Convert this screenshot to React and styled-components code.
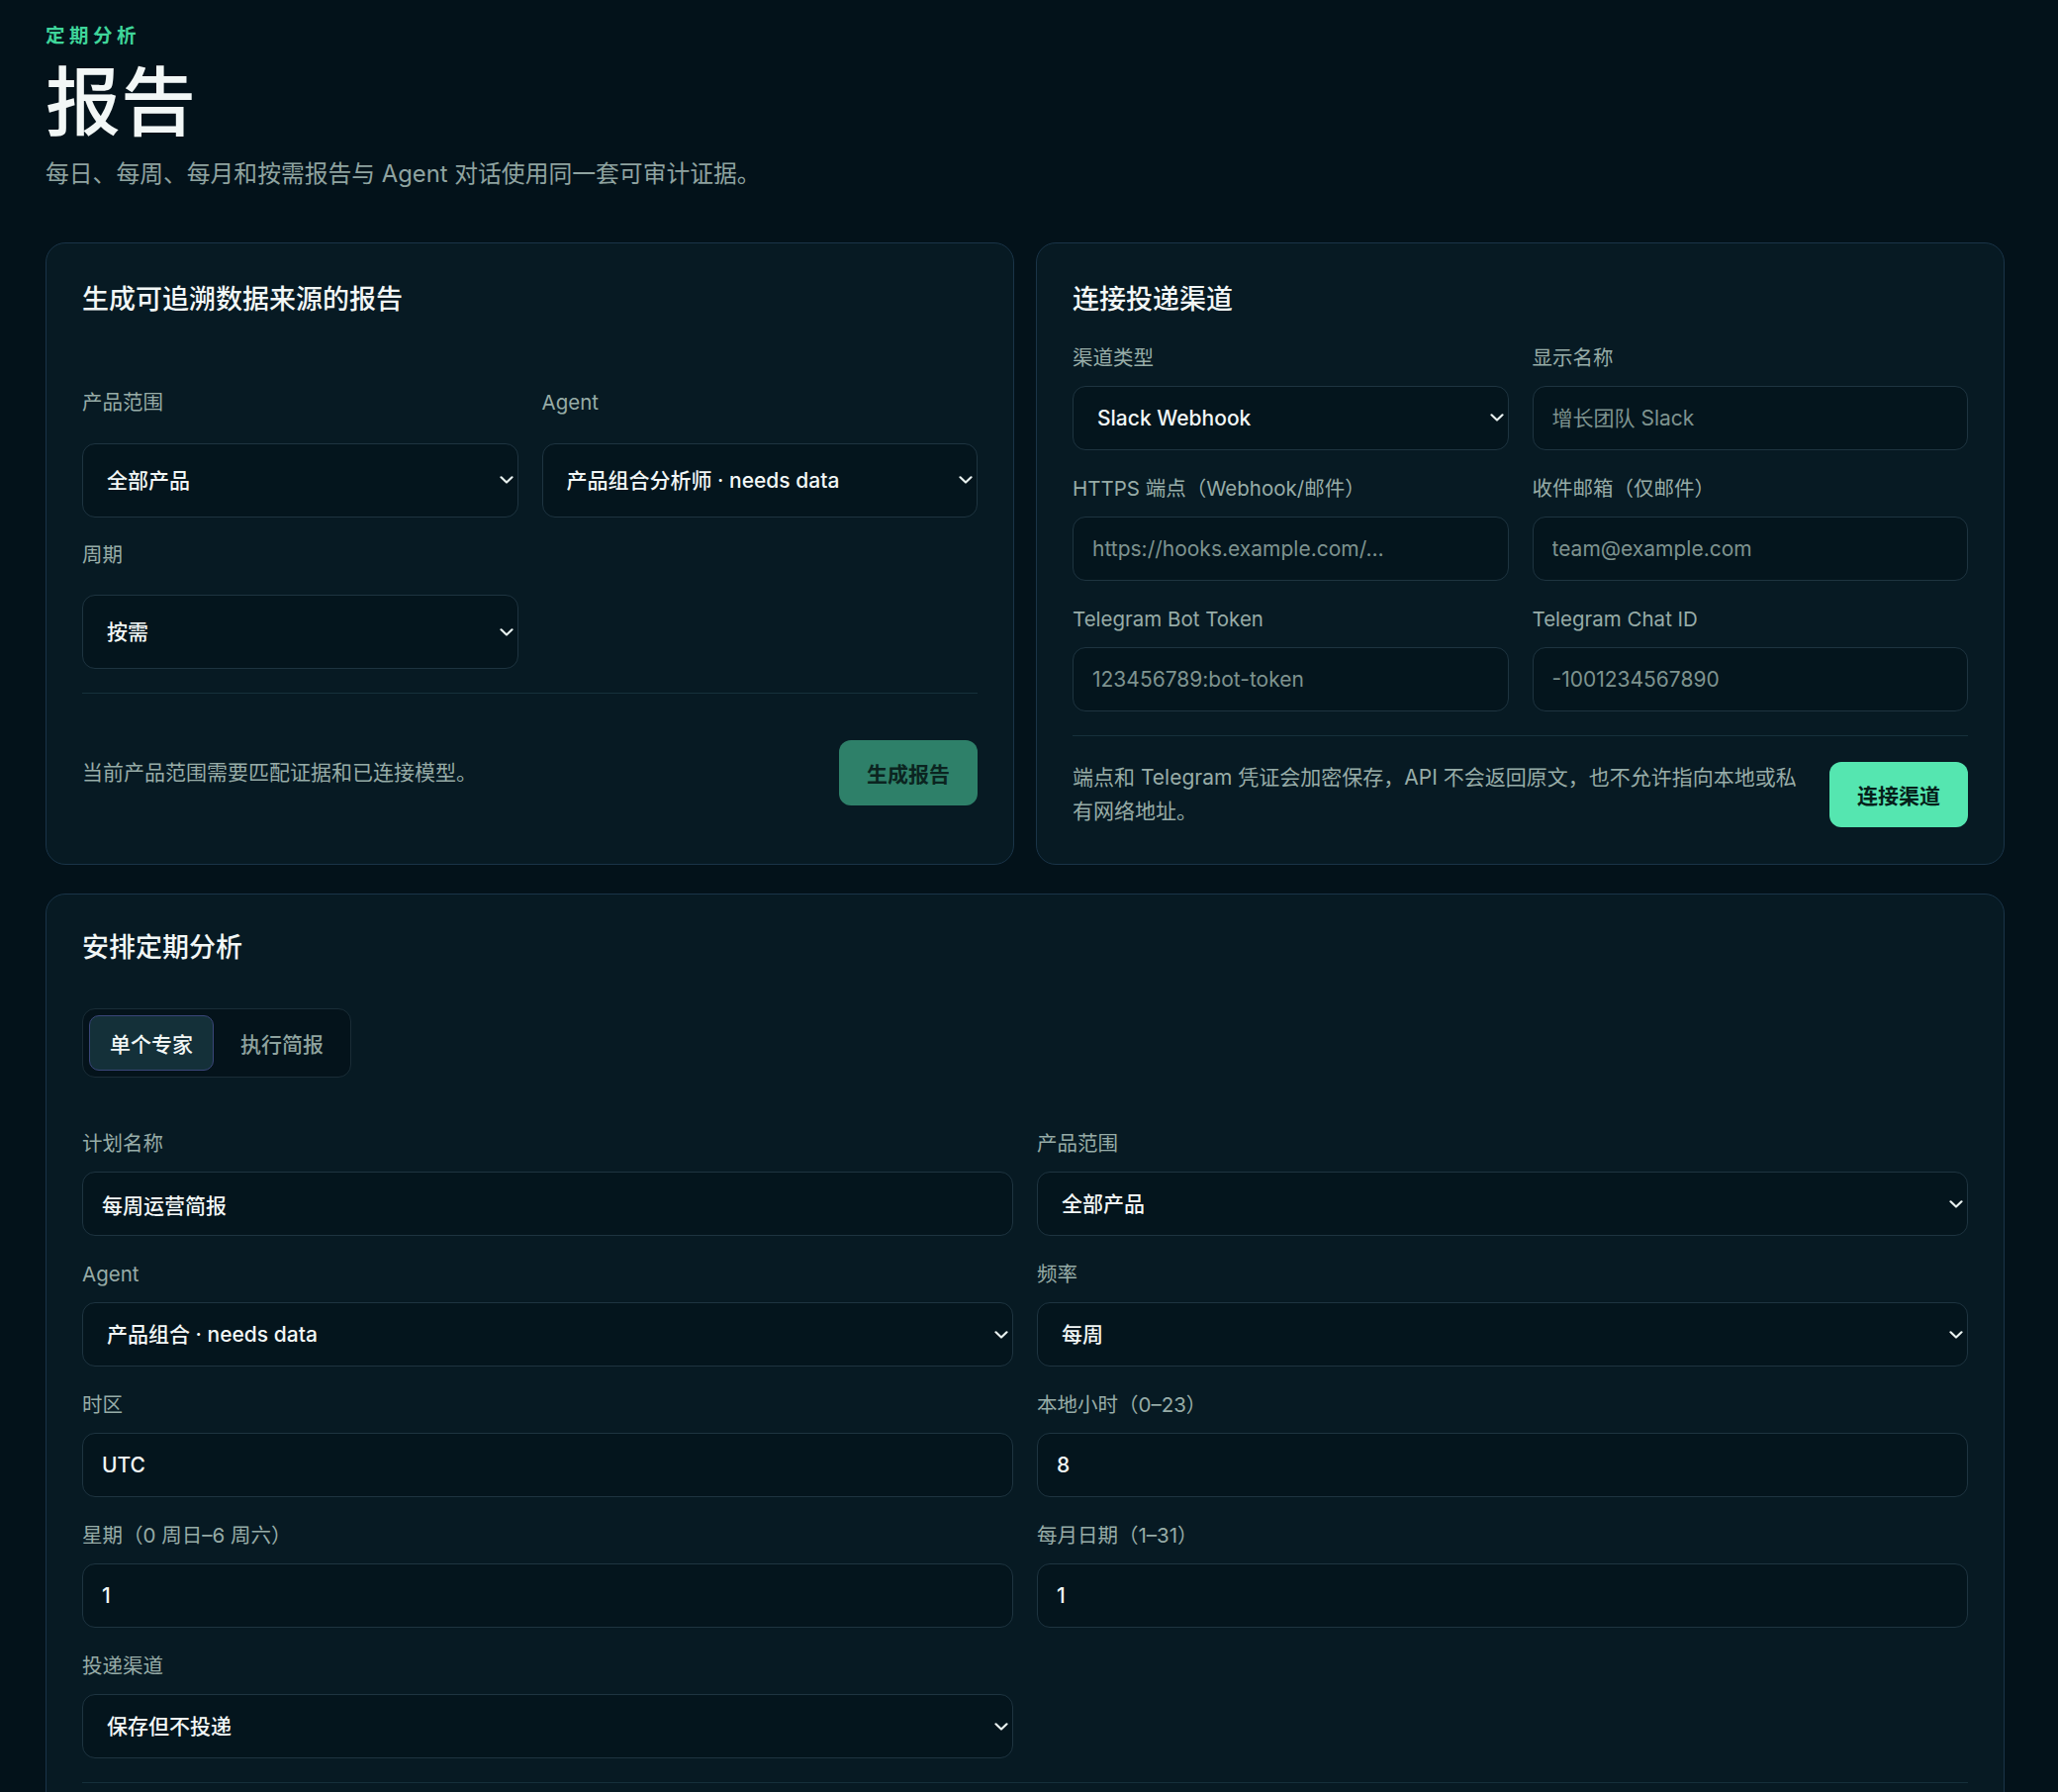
import React from 'react';
import styled, { createGlobalStyle } from 'styled-components';

const GlobalStyle = createGlobalStyle`
  * { box-sizing: border-box; }
  html, body { margin: 0; padding: 0; background: #03121a; }
  body {
    font-family: Inter, "Noto Sans CJK SC", "Noto Sans", sans-serif;
    color: #eef5f3;
    -webkit-font-smoothing: antialiased;
  }
`;

const Page = styled.main`
  padding: 23px 54px 80px 46px;
`;

const Eyebrow = styled.div`
  font-size: 19.5px;
  line-height: 26px;
  font-weight: 700;
  letter-spacing: 4.5px;
  color: #3fd59a;
`;

const Title = styled.h1`
  margin: 12px 0 0;
  font-size: 76px;
  line-height: 84px;
  font-weight: 500;
  color: #f2f7f6;
`;

const Subtitle = styled.p`
  margin: 14px 0 0;
  font-size: 23.8px;
  line-height: 34px;
  color: #8fa3a0;
`;

const TopRow = styled.div`
  margin-top: 52px;
  display: grid;
  grid-template-columns: 1fr 1fr;
  gap: 22px;
  align-items: stretch;
`;

const Card = styled.section`
  background: #071a23;
  border: 1px solid #1a3448;
  border-radius: 20px;
  padding: 36px;
  display: flex;
  flex-direction: column;
  margin-top: ${(p) => p.$mt || 0}px;
`;

const CardTitle = styled.h2`
  margin: ${(p) => p.$top || 0}px 0 ${(p) => p.$gap}px;
  font-size: 27px;
  line-height: 34.5px;
  font-weight: 500;
  color: #f2f7f6;
`;

const FieldGrid = styled.div`
  display: grid;
  grid-template-columns: 1fr 1fr;
  column-gap: 24px;
  row-gap: ${(p) => p.$rowGap}px;
  margin-top: ${(p) => p.$mt || 0}px;
`;

const Field = styled.label`
  display: flex;
  flex-direction: column;
  gap: ${(p) => p.$gap}px;
  min-width: 0;
`;

const Label = styled.span`
  font-size: 20.5px;
  line-height: 31.5px;
  color: #97aca7;
`;

const Input = styled.input`
  width: 100%;
  height: ${(p) => p.$h || 65}px;
  padding: 0 19px;
  background: #04151d;
  border: 1px solid #1e3440;
  border-radius: 13px;
  color: #f2f7f6;
  font-family: inherit;
  font-size: 21px;
  font-weight: 500;
  outline: none;
  &::placeholder {
    color: #7e938f;
    font-weight: 400;
  }
`;

const SelectWrap = styled.div`
  position: relative;
  width: 100%;
`;

const Select = styled.select`
  appearance: none;
  -webkit-appearance: none;
  width: 100%;
  height: ${(p) => p.$h || 65}px;
  padding: 0 40px 0 24px;
  background: #04151d;
  border: 1px solid #1e3440;
  border-radius: 13px;
  color: #f2f7f6;
  font-family: inherit;
  font-size: 21px;
  font-weight: 500;
  outline: none;
`;

const Chevron = styled.svg`
  position: absolute;
  right: 5px;
  top: 50%;
  transform: translateY(-50%);
  pointer-events: none;
`;

const Divider = styled.hr`
  margin: ${(p) => p.$mt || 24}px 0 0;
  border: 0;
  height: 1px;
  background: #16303b;
`;

const Footer = styled.div`
  display: flex;
  align-items: center;
  gap: 24px;
  padding-top: ${(p) => p.$pt}px;
`;

const FooterText = styled.p`
  flex: 1;
  margin: 0;
  font-size: 21px;
  line-height: 34px;
  color: #97aca7;
`;

const Button = styled.button`
  flex: none;
  height: 66px;
  padding: 0 28px;
  border: 0;
  border-radius: 12px;
  background: ${(p) => (p.$primary ? '#55e6b0' : '#2e8069')};
  color: ${(p) => (p.$primary ? '#05201a' : '#0b2420')};
  font-family: inherit;
  font-size: 21px;
  font-weight: 700;
  cursor: pointer;
`;

const Segmented = styled.div`
  align-self: flex-start;
  display: inline-flex;
  gap: 6px;
  padding: 6px;
  margin-top: 44px;
  background: #04131b;
  border: 1px solid #1a2d37;
  border-radius: 13px;
`;

const Tab = styled.button`
  height: 56px;
  padding: 0 20px;
  border-radius: 10px;
  border: 1.5px solid ${(p) => (p.$active ? '#3a4679' : 'transparent')};
  background: ${(p) => (p.$active ? '#143039' : 'transparent')};
  color: ${(p) => (p.$active ? '#f2f7f6' : '#8fa39f')};
  font-family: inherit;
  font-size: 21px;
  font-weight: 500;
  cursor: pointer;
`;

const ChevronIcon = () => (
  <Chevron width="14" height="9" viewBox="0 0 14 9" fill="none">
    <polyline points="1.5,1.8 7,7 12.5,1.8" stroke="#e8f1ef" strokeWidth="2.2" strokeLinecap="round" strokeLinejoin="round" />
  </Chevron>
);

const SelectField = ({ label, value, h, gap = 12.5 }) => (
  <Field $gap={gap}>
    <Label>{label}</Label>
    <SelectWrap>
      <Select $h={h} defaultValue={value}>
        <option value={value}>{value}</option>
      </Select>
      <ChevronIcon />
    </SelectWrap>
  </Field>
);

const InputField = ({ label, value, placeholder, gap = 12.5 }) => (
  <Field $gap={gap}>
    <Label>{label}</Label>
    {value !== undefined ? (
      <Input defaultValue={value} />
    ) : (
      <Input placeholder={placeholder} />
    )}
  </Field>
);

export default function App() {
  return (
    <>
      <GlobalStyle />
      <Page>
        <Eyebrow>定期分析</Eyebrow>
        <Title>报告</Title>
        <Subtitle>每日、每周、每月和按需报告与 Agent 对话使用同一套可审计证据。</Subtitle>

        <TopRow>
          <Card>
            <CardTitle $top={4} $gap={70.5}>生成可追溯数据来源的报告</CardTitle>
            <FieldGrid $rowGap={22}>
              <SelectField label="产品范围" value="全部产品" h={75} gap={25} />
              <SelectField label="Agent" value="产品组合分析师 · needs data" h={75} gap={25} />
              <SelectField label="周期" value="按需" h={75} gap={25} />
            </FieldGrid>
            <Divider $mt={24} />
            <Footer $pt={47}>
              <FooterText>当前产品范围需要匹配证据和已连接模型。</FooterText>
              <Button>生成报告</Button>
            </Footer>
          </Card>

          <Card>
            <CardTitle $top={4} $gap={25}>连接投递渠道</CardTitle>
            <FieldGrid $rowGap={23}>
              <SelectField label="渠道类型" value="Slack Webhook" />
              <InputField label="显示名称" placeholder="增长团队 Slack" />
              <InputField label="HTTPS 端点（Webhook/邮件）" placeholder="https://hooks.example.com/…" />
              <InputField label="收件邮箱（仅邮件）" placeholder="team@example.com" />
              <InputField label="Telegram Bot Token" placeholder="123456789:bot-token" />
              <InputField label="Telegram Chat ID" placeholder="-1001234567890" />
            </FieldGrid>
            <Divider $mt={24} />
            <Footer $pt={25}>
              <FooterText>端点和 Telegram 凭证会加密保存，API 不会返回原文，也不允许指向本地或私有网络地址。</FooterText>
              <Button $primary>连接渠道</Button>
            </Footer>
          </Card>
        </TopRow>

        <Card $mt={29}>
          <CardTitle $top={1} $gap={0}>安排定期分析</CardTitle>
          <Segmented>
            <Tab $active>单个专家</Tab>
            <Tab>执行简报</Tab>
          </Segmented>
          <FieldGrid $rowGap={23} $mt={51}>
            <InputField label="计划名称" value="每周运营简报" />
            <SelectField label="产品范围" value="全部产品" />
            <SelectField label="Agent" value="产品组合 · needs data" />
            <SelectField label="频率" value="每周" />
            <InputField label="时区" value="UTC" />
            <InputField label="本地小时（0–23）" value="8" />
            <InputField label="星期（0 周日–6 周六）" value="1" />
            <InputField label="每月日期（1–31）" value="1" />
            <SelectField label="投递渠道" value="保存但不投递" />
          </FieldGrid>
          <Divider $mt={24} />
        </Card>
      </Page>
    </>
  );
}
